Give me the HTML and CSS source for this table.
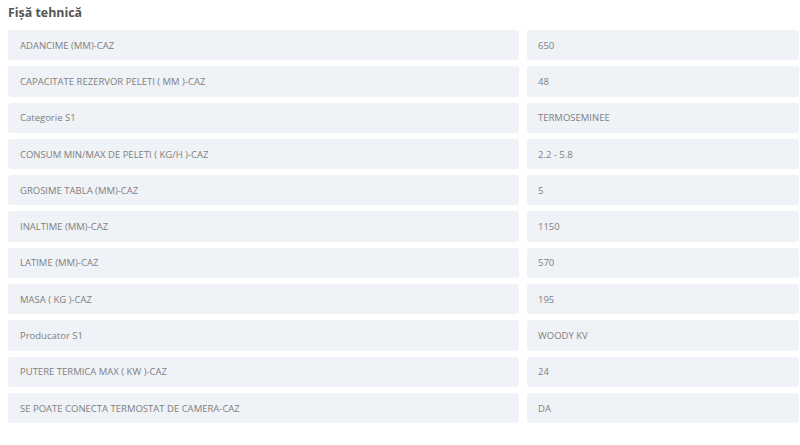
FILE: index.html
```html
<!DOCTYPE html>
<html lang="ro">
<head>
    <meta charset="UTF-8">
    <meta name="viewport" content="width=device-width, initial-scale=1.0">
    <title>Fișă tehnică</title>
    <link rel="stylesheet" href="styles.css">
</head>
<body>
    <div class="specs">
        <h3 class="specs-title">Fișă tehnică</h3>
        <div class="specs-grid">
            <div class="spec-name">ADANCIME (MM)-CAZ</div>
            <div class="spec-value">650</div>
            <div class="spec-name">CAPACITATE REZERVOR PELETI ( MM )-CAZ</div>
            <div class="spec-value">48</div>
            <div class="spec-name">Categorie S1</div>
            <div class="spec-value">TERMOSEMINEE</div>
            <div class="spec-name">CONSUM MIN/MAX DE PELETI ( KG/H )-CAZ</div>
            <div class="spec-value">2.2 - 5.8</div>
            <div class="spec-name">GROSIME TABLA (MM)-CAZ</div>
            <div class="spec-value">5</div>
            <div class="spec-name">INALTIME (MM)-CAZ</div>
            <div class="spec-value">1150</div>
            <div class="spec-name">LATIME (MM)-CAZ</div>
            <div class="spec-value">570</div>
            <div class="spec-name">MASA ( KG )-CAZ</div>
            <div class="spec-value">195</div>
            <div class="spec-name">Producator S1</div>
            <div class="spec-value">WOODY KV</div>
            <div class="spec-name">PUTERE TERMICA MAX ( KW )-CAZ</div>
            <div class="spec-value">24</div>
            <div class="spec-name">SE POATE CONECTA TERMOSTAT DE CAMERA-CAZ</div>
            <div class="spec-value">DA</div>
        </div>
    </div>
</body>
</html>
```

FILE: styles.css
```css
body {
    margin: 0;
    padding: 0;
    background-color: #ffffff;
    font-family: "Open Sans", Arial, sans-serif;
    color: #7f7f7f;
}

.specs {
    padding: 4px 1px 0 8px;
}

.specs-title {
    margin: 0 0 8px 0;
    font-size: 12.4px;
    font-weight: 700;
    line-height: 18px;
    color: #555555;
}

.specs-grid {
    display: grid;
    grid-template-columns: 511px 1fr;
    column-gap: 8px;
    row-gap: 6px;
}

.spec-name,
.spec-value {
    height: 30.3px;
    display: flex;
    align-items: center;
    padding: 0 12px;
    background-color: #eff2f7;
    border-radius: 3px;
    font-size: 9.5px;
}

.spec-value {
    padding-left: 11px;
}
```
